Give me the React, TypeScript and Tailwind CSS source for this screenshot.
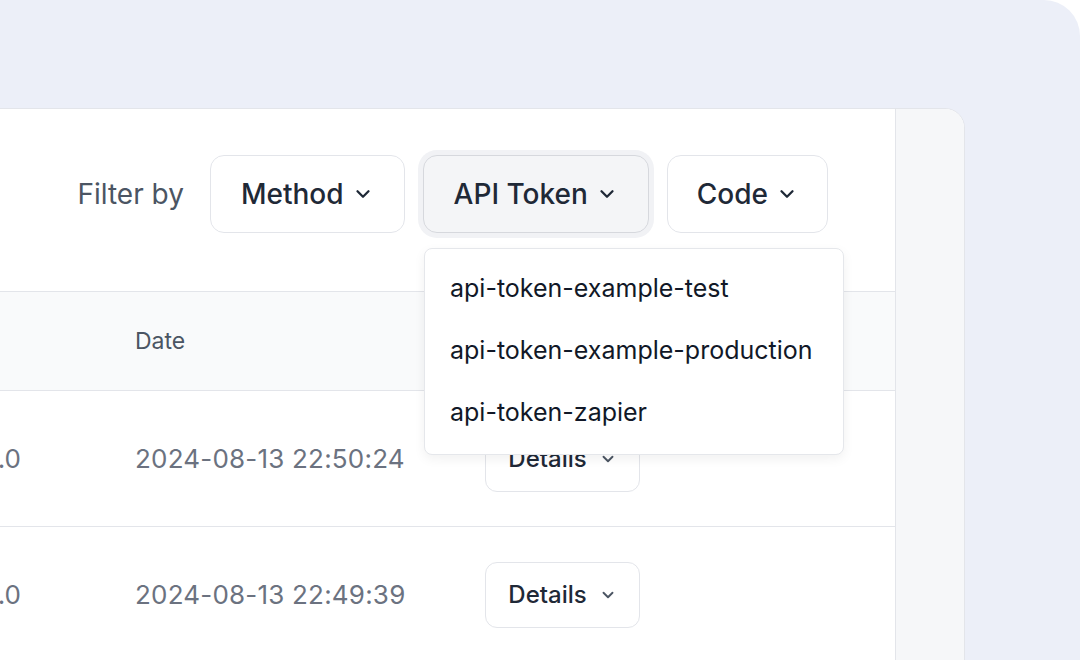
import { ChevronDown } from "lucide-react"

const rows = [
  { agent: "curl/7.41.0", date: "2024-08-13 22:50:24" },
  { agent: "curl/7.41.0", date: "2024-08-13 22:49:39" },
]

const tokens = ["api-token-example-test", "api-token-example-production", "api-token-zapier"]

export default function App() {
  return (
    <div className="w-[1080px] h-[660px] overflow-hidden bg-white" style={{ fontFamily: "Inter, 'Noto Sans', sans-serif" }}>
      <div className="h-full bg-[#eceff8] rounded-tr-[36px] pt-[108px]">
        <div className="relative -ml-10 w-[1005px] h-[600px] flex bg-white border border-[#e3e5ea] rounded-tr-[20px] overflow-hidden">
          <div className="w-[935px] h-full flex flex-col border-r border-[#e3e5ea]">
            <div className="h-[182px] flex items-start justify-end gap-[18px] pr-[67px] pt-[46px]">
              <span className="h-[78px] flex items-center text-[28px] text-[#4b5563] mr-[8px]">Filter by</span>
              <button className="h-[78px] px-[30px] flex items-center gap-2 rounded-[14px] border border-[#e3e5ea] text-[28px] font-medium text-[#1f2937]">
                Method <ChevronDown size={22} strokeWidth={2.5} />
              </button>
              <button className="h-[78px] px-[30px] flex items-center gap-2 rounded-[14px] border border-[#d6d8dd] bg-[#f4f5f7] ring-[5px] ring-[#f1f2f5] text-[28px] font-medium text-[#1f2937]">
                API Token <ChevronDown size={22} strokeWidth={2.5} />
              </button>
              <button className="h-[78px] px-[29px] flex items-center gap-2 rounded-[14px] border border-[#e3e5ea] text-[28px] font-medium text-[#1f2937]">
                Code <ChevronDown size={22} strokeWidth={2.5} />
              </button>
            </div>
            <div className="h-[100px] flex items-center bg-[#f9fafb] border-y border-[#e3e5ea]">
              <div className="w-[174px]" />
              <span className="text-[23px] text-[#4b5563]">Date</span>
            </div>
            {rows.map((r, i) => (
              <div key={i} className="h-[136px] shrink-0 flex items-center border-b border-[#e3e5ea]">
                <div className="w-[174px] pr-[114px] flex justify-end text-[26px] text-[#6b7280] whitespace-nowrap">{r.agent.slice(5)}</div>
                <div className="w-[350px] text-[26px] text-[#6b7280] tracking-[0.2px]">{r.date}</div>
                <button className="h-[66px] w-[155px] flex items-center justify-center gap-3 rounded-[12px] border border-[#e3e5ea] text-[24px] font-medium text-[#1f2937]">
                  Details <ChevronDown size={18} strokeWidth={2.5} className="text-[#4b5563]" />
                </button>
              </div>
            ))}
          </div>
          <div className="flex-1 bg-[#f6f7f9]" />
          <div className="absolute left-[463px] top-[139px] w-[420px] h-[207px] bg-white border border-[#e5e7eb] rounded-[8px] shadow-[0_4px_12px_rgba(0,0,0,0.06)] py-[9px] flex flex-col">
            {tokens.map((t) => (
              <div key={t} className="h-[62px] flex items-center px-[25px] text-[25px] text-[#111827]">{t}</div>
            ))}
          </div>
        </div>
      </div>
    </div>
  )
}
